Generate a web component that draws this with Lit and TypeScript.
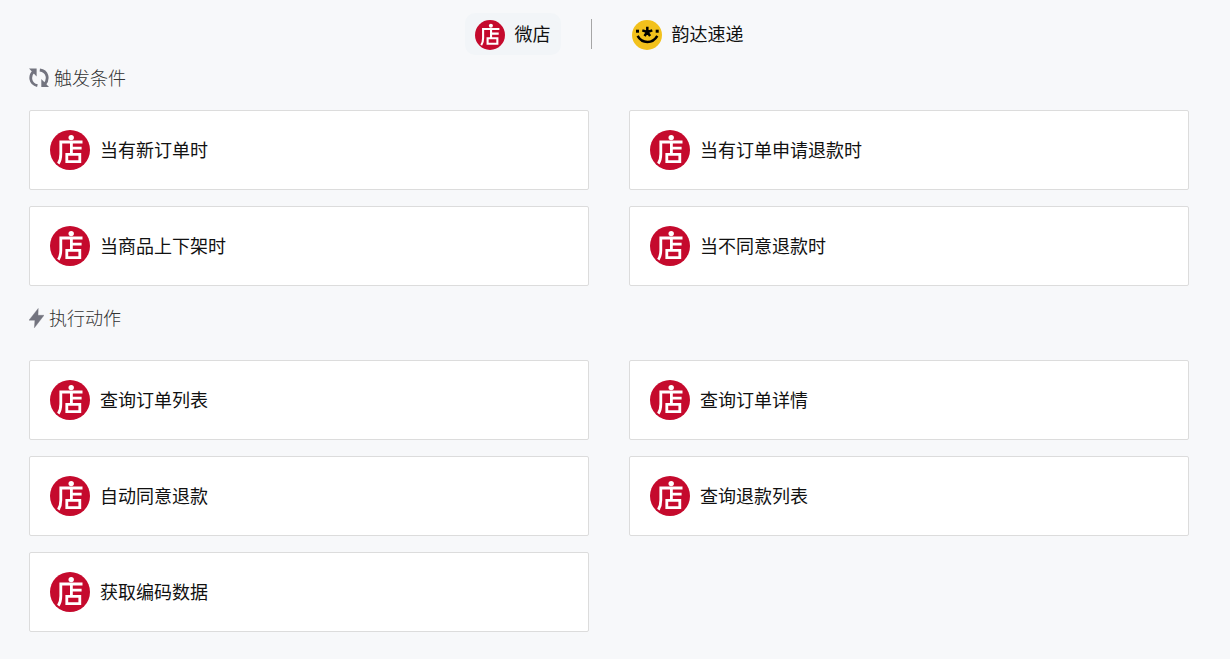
import { LitElement, html, css } from "lit";
import { customElement, property, state } from "lit/decorators.js";
import { classMap } from "lit/directives/class-map.js";

const TRIGGERS = ["当有新订单时", "当有订单申请退款时", "当商品上下架时", "当不同意退款时"];
const ACTIONS = ["查询订单列表", "查询订单详情", "自动同意退款", "查询退款列表", "获取编码数据"];

const weidianLogo = html`<svg viewBox="0 0 40 40" aria-hidden="true">
  <circle cx="20" cy="20" r="20" fill="#c50a2d" />
  <circle cx="21.2" cy="7.6" r="2.7" fill="#fff" />
  <g fill="none" stroke="#fff" stroke-width="2.8">
    <path d="M32.5 12H10.8V24Q10.8 30 8.3 33.6" />
    <path d="M21.4 12V24.5M21.4 18.2H31.6" />
    <path d="M16.8 24.4H29.8V31.6H16.8Z" />
  </g>
</svg>`;

const yundaLogo = html`<svg viewBox="0 0 30 30" aria-hidden="true">
  <circle cx="15" cy="15" r="15" fill="#f2c11c" />
  <rect x="4" y="9.7" width="3" height="3" fill="#000" />
  <rect x="23.7" y="9.7" width="3" height="3" fill="#000" />
  <g fill="none" stroke="#000" stroke-width="2.5">
    <path d="M15.3 6.7V12M15.3 12L10.3 10.4M15.3 12L20.3 10.4M15.3 12L12.5 16M15.3 12L18.1 16" />
    <path d="M5.6 15.8Q9 21.9 15.4 21.9Q21.8 21.9 25.3 15.8" />
  </g>
</svg>`;

const cycleIcon = html`<svg width="20" height="20" viewBox="0 0 20 20" aria-hidden="true">
  <g fill="none" stroke="#73747f" stroke-width="2.8">
    <path d="M4.6 3.6C.4 7.6 .3 15.6 8.4 17.7" />
    <path d="M10.8 2C18.7 3 20 11 15.8 16" />
  </g>
  <path d="M0 .6H7.6V8.6Z" fill="#73747f" />
  <path d="M20 19H12.3V11Z" fill="#73747f" />
</svg>`;

const boltIcon = html`<svg width="15" height="20" viewBox="0 0 15 20" aria-hidden="true">
  <path d="M9.2 .5L0 12.2H5.9L5.4 19.8L15 7.3H9Z" fill="#73747f" stroke="#73747f" stroke-width=".4" />
</svg>`;

@customElement("operation-list")
class OperationList extends LitElement {
  @property() heading = "";
  @property() kind = "trigger";
  @property({ attribute: false }) items: string[] = [];

  static styles = css`
    :host {
      display: block;
    }
    .heading {
      display: flex;
      align-items: center;
      gap: 5px;
      margin: 0 0 19px;
      font-size: 18px;
      font-weight: 300;
      line-height: 24px;
      color: #333;
    }
    .heading.action {
      margin-bottom: 29px;
    }
    .grid {
      display: grid;
      grid-template-columns: 1fr 1fr;
      gap: 16px 40px;
      margin: 0;
      padding: 0;
      list-style: none;
    }
    .card {
      display: flex;
      align-items: center;
      gap: 10px;
      box-sizing: border-box;
      padding: 19px 20px;
      border: 1px solid #dcdcdc;
      border-radius: 2px;
      background: #fff;
      color: #111;
      font-size: 18px;
      line-height: 24px;
    }
    .label {
      padding-bottom: 2px;
    }
    .logo {
      flex: none;
      width: 40px;
      height: 40px;
    }
    svg {
      display: block;
    }
  `;

  render() {
    return html`
      <h2 class=${classMap({ heading: true, action: this.kind === "action" })}>
        ${this.kind === "action" ? boltIcon : cycleIcon}<span class="label">${this.heading}</span>
      </h2>
      <ul class="grid">
        ${this.items.map(
          (item) => html`<li class="card"><span class="logo">${weidianLogo}</span><span class="label">${item}</span></li>`
        )}
      </ul>
    `;
  }
}

@customElement("app-root")
class AppRoot extends LitElement {
  @state() private selected = 0;

  static styles = css`
    :host {
      display: block;
      box-sizing: border-box;
      min-height: 100vh;
      padding: 13px 41px 27px 29px;
      background: #f7f8fa;
      font-family: "Noto Sans CJK SC", sans-serif;
    }
    .tabs {
      display: flex;
      justify-content: center;
      align-items: center;
      gap: 30px;
    }
    .tab {
      display: flex;
      align-items: center;
      gap: 10px;
      padding: 7px 10px 5px;
      border: 0;
      border-radius: 10px;
      background: none;
      color: #111;
      font: inherit;
      font-size: 18px;
      line-height: 24px;
      cursor: pointer;
    }
    .tab.selected {
      background: #f2f5f8;
    }
    .label {
      padding-bottom: 4px;
    }
    .icon {
      width: 30px;
      height: 30px;
    }
    .divider {
      width: 1px;
      height: 30px;
      background: #a6a6a6;
    }
    svg {
      display: block;
    }
    .section {
      margin-top: 10px;
    }
    .section + .section {
      margin-top: 19px;
    }
  `;

  private tab(index: number, label: string, logo: unknown) {
    return html`<button
      type="button"
      class=${classMap({ tab: true, selected: this.selected === index })}
      aria-pressed=${this.selected === index ? "true" : "false"}
      @click=${() => (this.selected = index)}
    ><span class="icon">${logo}</span><span class="label">${label}</span></button>`;
  }

  render() {
    return html`
      <nav class="tabs">
        ${this.tab(0, "微店", weidianLogo)}
        <span class="divider"></span>
        ${this.tab(1, "韵达速递", yundaLogo)}
      </nav>
      <operation-list class="section" heading="触发条件" kind="trigger" .items=${TRIGGERS}></operation-list>
      <operation-list class="section" heading="执行动作" kind="action" .items=${ACTIONS}></operation-list>
    `;
  }
}
